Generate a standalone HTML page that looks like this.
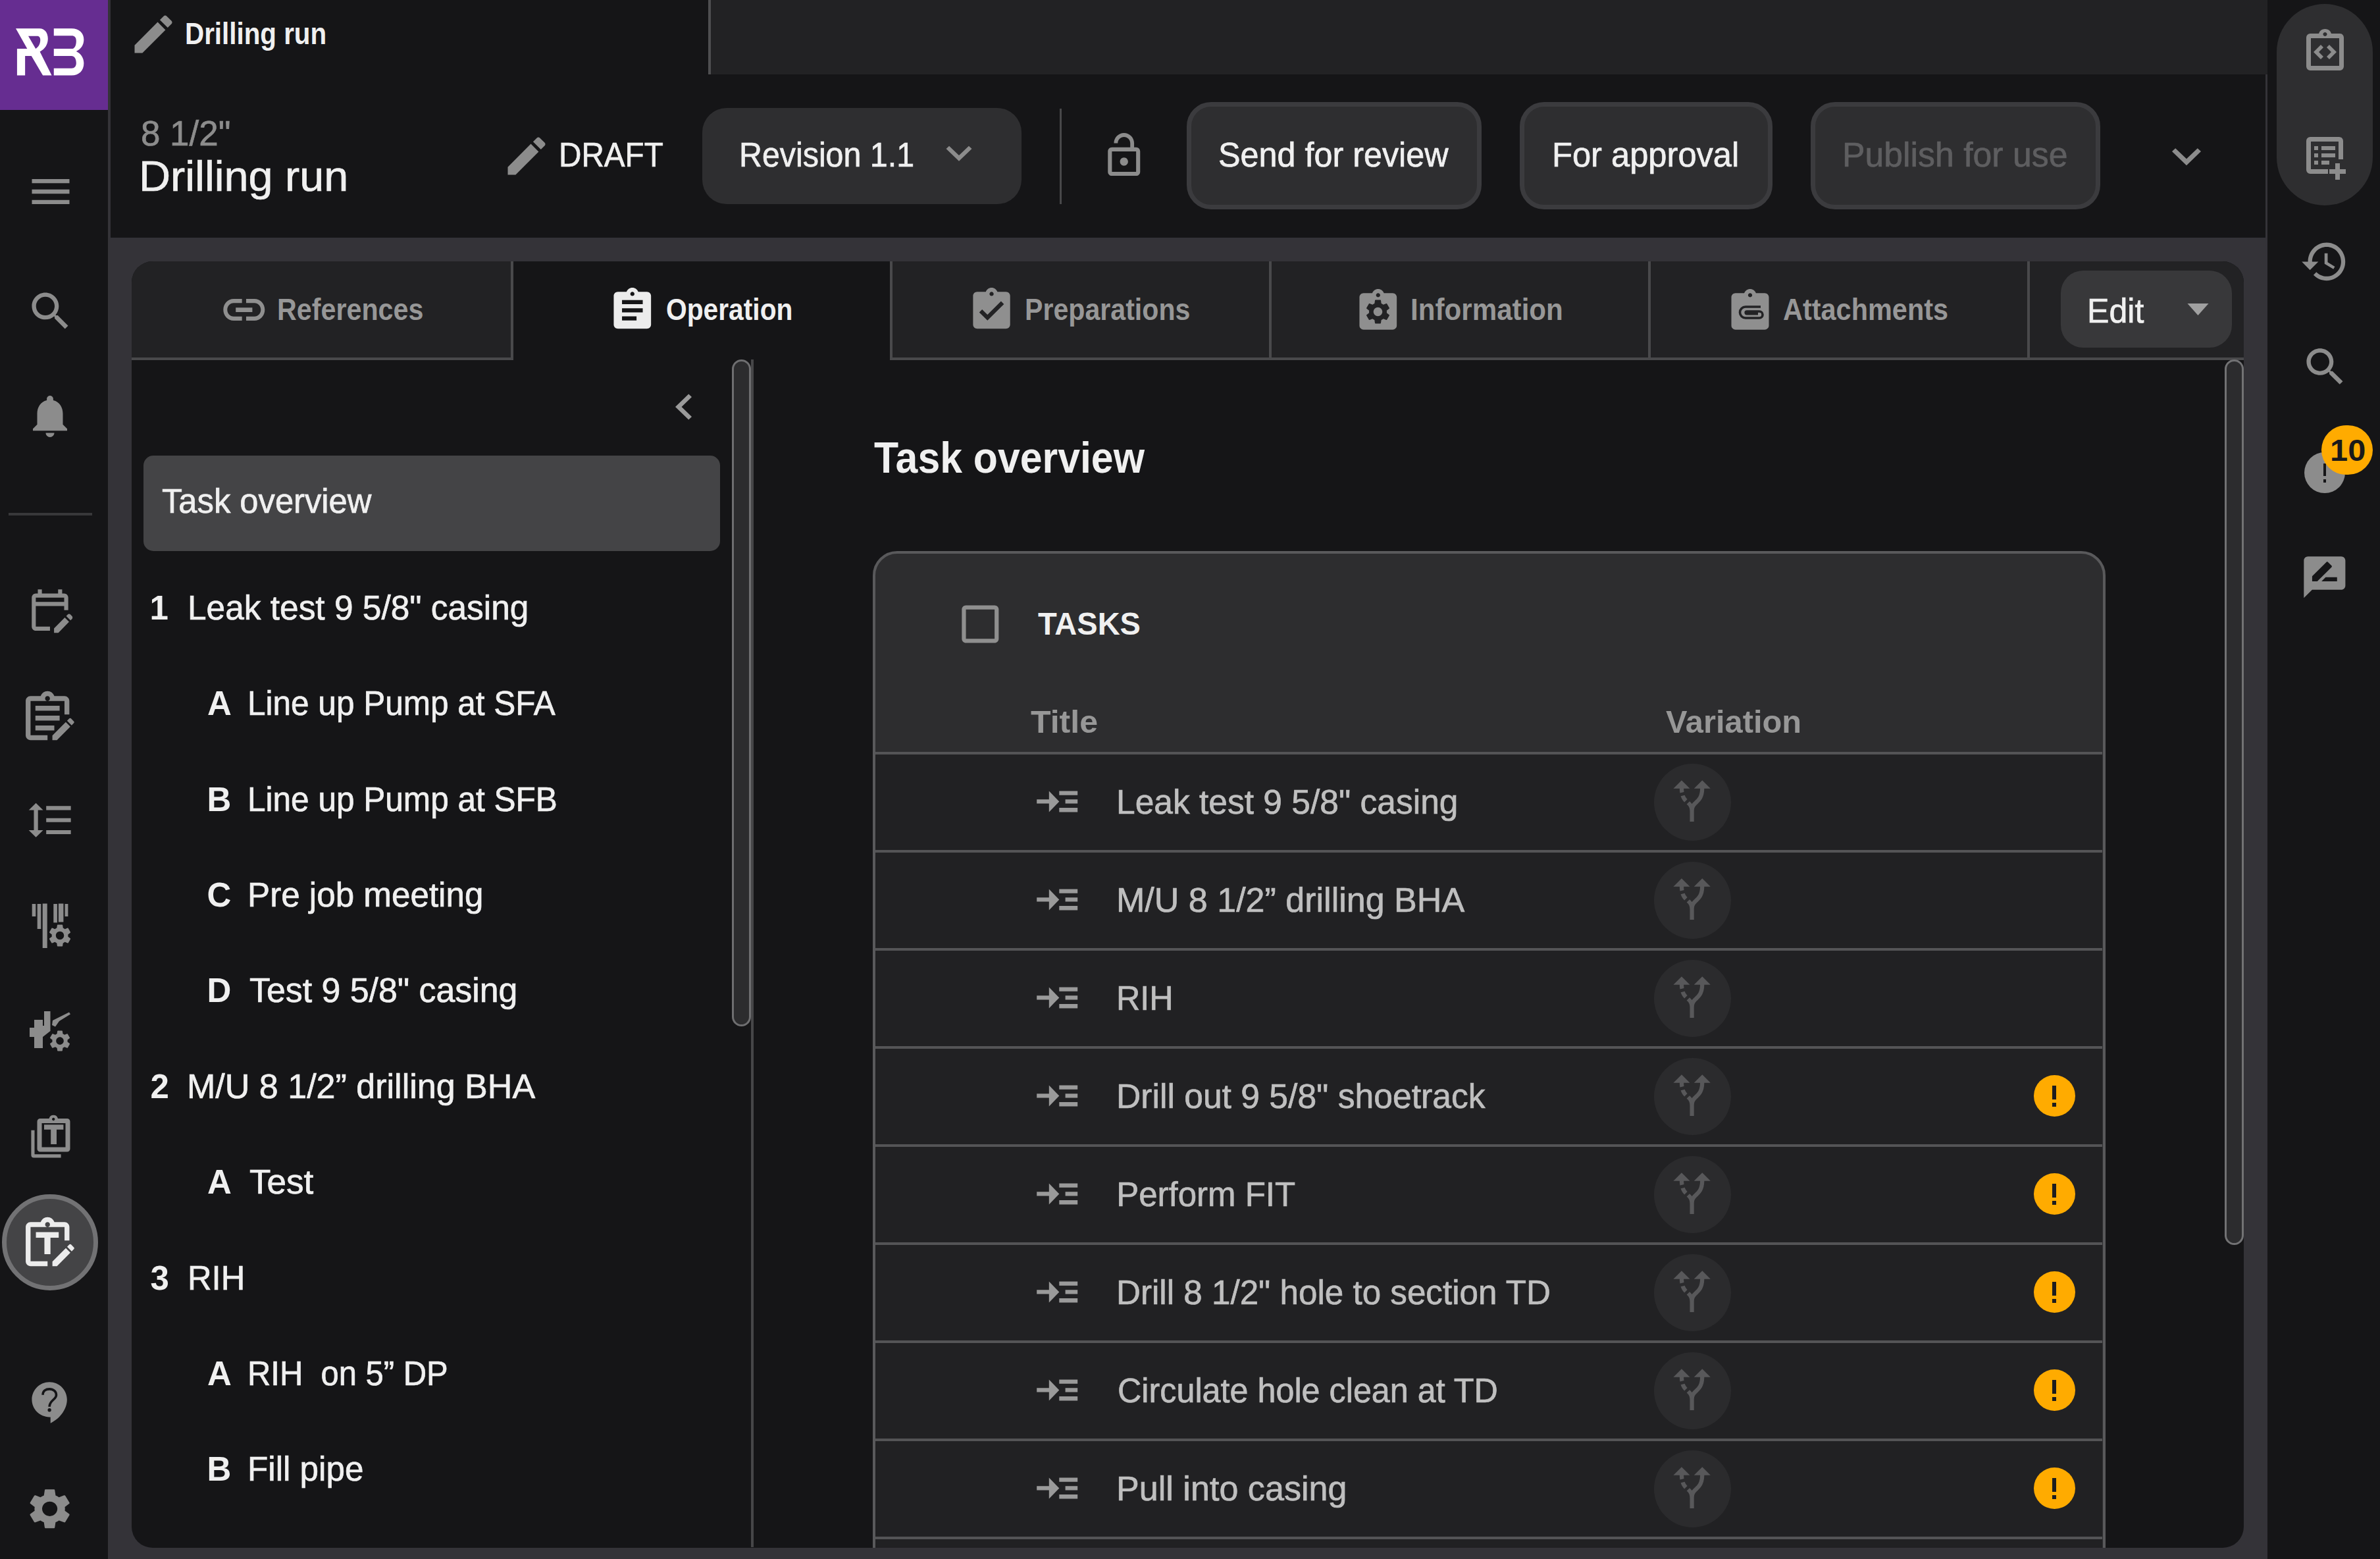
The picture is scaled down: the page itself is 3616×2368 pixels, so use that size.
<!DOCTYPE html>
<html lang="en"><head><meta charset="utf-8"><title>Drilling run</title>
<style>
html,body{margin:0;padding:0;}
body{width:3616px;height:2368px;overflow:hidden;background:#343338;font-family:"Liberation Sans",sans-serif;position:relative;}
div,nav,header,section,aside,main,button,svg,span{position:absolute;margin:0;padding:0;}
button{font:inherit;color:inherit;border:none;outline:none;}
span.t{white-space:pre;line-height:1;transform-origin:0 0;-webkit-text-stroke:0.7px currentColor;}
span.b{-webkit-text-stroke:0;}
</style></head>
<body>
<nav class="side" style="left:0px;top:0px;width:163.7px;height:2368px;background:#151517;"><div class="logo" style="left:0px;top:0px;width:163.7px;height:166.5px;background:#662d91;"><svg style="left:24.4px;top:41.7px;width:104px;height:73.200px" viewBox="190 325 810 570" fill="#fff" preserveAspectRatio="none"><path fill-rule="evenodd" d="M190,335 H470 C535,335 570,390 570,455 C570,525 535,575 475,610 L615,890 H510 L375,660 H300 V890 H205 V575 H325 Z M338,425 L425,575 C465,550 480,510 480,470 C480,440 465,425 440,425 Z"/><path d="M640,335 H850 C940,335 995,390 995,465 C995,530 960,580 905,605 C960,630 995,685 995,745 C995,830 940,890 850,890 H640 V805 H850 C885,805 905,780 905,745 C905,690 880,660 850,660 H640 V575 H850 C885,575 905,540 905,480 C905,440 885,420 850,420 H640 Z"/></svg></div><svg style="left:38.5px;top:253px;width:76px;height:76px" viewBox="0 0 24 24" fill="#8c8c8c" preserveAspectRatio="none"><path d="M3 18h18v-2H3v2zm0-5h18v-2H3v2zm0-7v2h18V6H3z"/></svg><svg style="left:38.6px;top:434.6px;width:75.5px;height:75.5px" viewBox="0 0 24 24" fill="#8c8c8c" preserveAspectRatio="none"><path d="M15.5 14h-.79l-.28-.27C15.41 12.59 16 11.11 16 9.5 16 5.91 13.09 3 9.5 3S3 5.91 3 9.5 5.91 16 9.5 16c1.61 0 3.09-.59 4.23-1.57l.27.28v.79l5 4.99L20.49 19l-4.99-5zm-6 0C7.01 14 5 11.99 5 9.5S7.01 5 9.5 5 14 7.01 14 9.5 11.99 14 9.5 14z"/></svg><svg style="left:37px;top:592.9px;width:78px;height:77.5px" viewBox="0 0 24 24" fill="#8c8c8c" preserveAspectRatio="none"><path d="M12 22c1.1 0 2-.9 2-2h-4c0 1.1.89 2 2 2zm6-6v-5c0-3.07-1.64-5.64-4.5-6.32V4c0-.83-.67-1.5-1.5-1.5s-1.5.67-1.5 1.5v.68C7.63 5.36 6 7.92 6 11v5l-2 2v1h16v-1l-2-2z"/></svg><div style="left:13px;top:779px;width:127px;height:3.5px;background:#38383a;"></div><svg style="left:38.8px;top:888.7px;width:73.9px;height:75.4px" viewBox="0 0 24 24" fill="#8c8c8c" preserveAspectRatio="none"><path d="M5 10h14v2h2V6c0-1.1-.9-2-2-2h-1V2h-2v2H8V2H6v2H5c-1.11 0-1.99.9-1.99 2L3 20c0 1.1.89 2 2 2h7v-2H5V10zm0-4h14v2H5V6zm17.84 10.28l-.71.71-2.12-2.12.71-.71c.39-.39 1.02-.39 1.41 0l.71.71c.39.39.39 1.02 0 1.41zm-3.54-.7l2.12 2.12-5.3 5.3H14v-2.12l5.3-5.3z"/></svg><svg style="left:28.4px;top:1045.7px;width:88.4px;height:89.5px" viewBox="0 0 24 24" fill="#8c8c8c" preserveAspectRatio="none"><path fill-rule="evenodd" d="M19 3h-4.180C14.400 1.840 13.300 1 12 1S9.600 1.840 9.180 3H5c-1.100 0-2 .900-2 2v14c0 1.100.900 2 2 2h7v-2H5V5h14v5.500h2V5c0-1.100-.900-2-2-2zm-7 0c.550 0 1 .450 1 1s-.450 1-1 1-1-.450-1-1 .450-1 1-1z"/><path d="M7 7h10v2H7zM7 11h10v2H7zM7 15h7.800v2H7z"/><g transform="translate(12.500,10.500) scale(0.5)"><path d="M3 17.25V21h3.75L17.81 9.94l-3.75-3.75L3 17.25zM20.71 7.04c.39-.39.39-1.02 0-1.41l-2.34-2.34c-.39-.39-1.02-.39-1.41 0l-1.83 1.83 3.75 3.75 1.83-1.83z"/></g></svg><svg style="left:39.3px;top:1209.3px;width:74.9px;height:73.4px" viewBox="0 0 24 24" fill="#8c8c8c" preserveAspectRatio="none"><path d="M6 7h2.5L5 3.5 1.5 7H4v10H1.5L5 20.5 8.5 17H6V7zm4-2v2h12V5H10zm0 14h12v-2H10v2zm0-6h12v-2H10v2z"/></svg><svg style="left:48px;top:1372px;width:60px;height:69px" viewBox="0 0 60 69" fill="#8c8c8c" preserveAspectRatio="none"><rect x=".700" y="1" width="5.600" height="19"/><rect x="8.700" y="1" width="5.600" height="38"/><rect x="16.700" y=".500" width="7" height="67.500"/><rect x="33.300" y="1" width="5.600" height="28.400"/><rect x="40.900" y=".500" width="7.500" height="28"/><rect x="50.600" y="1" width="4.800" height="19"/><g transform="translate(22.400,28.400) scale(1.72)"><path d="M19.14 12.94c.04-.3.06-.61.06-.94 0-.32-.02-.64-.07-.94l2.03-1.58c.18-.14.23-.41.12-.61l-1.92-3.32c-.12-.22-.37-.29-.59-.22l-2.39.96c-.5-.38-1.03-.7-1.62-.94l-.36-2.54c-.04-.24-.24-.41-.48-.41h-3.84c-.24 0-.43.17-.47.41l-.36 2.54c-.59.24-1.13.57-1.62.94l-2.39-.96c-.22-.08-.47 0-.59.22L2.74 8.87c-.12.21-.08.47.12.61l2.03 1.58c-.05.3-.09.63-.09.94s.02.64.07.94l-2.03 1.58c-.18.14-.23.41-.12.61l1.92 3.32c.12.22.37.29.59.22l2.39-.96c.5.38 1.03.7 1.62.94l.36 2.54c.05.24.24.41.48.41h3.84c.24 0 .44-.17.47-.41l.36-2.54c.59-.24 1.13-.56 1.62-.94l2.39.96c.22.08.47 0 .59-.22l1.92-3.32c.12-.22.07-.47-.12-.61l-2.01-1.58zM12 15.6c-1.98 0-3.6-1.62-3.6-3.6s1.62-3.6 3.6-3.6 3.6 1.62 3.6 3.6-1.62 3.6-3.6 3.6z"/></g></svg><svg style="left:45px;top:1536px;width:62px;height:61px" viewBox="0 0 62 61" fill="#8c8c8c" preserveAspectRatio="none"><path d="M7 13H20V22H22V0H31.500V30L20 39V56H7V39H0V25H7Z"/><path d="M35 14L60 1.500 62 4.500 45 15 39 23.500 34 21Z"/><g transform="translate(26.700,25.700) scale(1.61)"><path d="M19.14 12.94c.04-.3.06-.61.06-.94 0-.32-.02-.64-.07-.94l2.03-1.58c.18-.14.23-.41.12-.61l-1.92-3.32c-.12-.22-.37-.29-.59-.22l-2.39.96c-.5-.38-1.03-.7-1.62-.94l-.36-2.54c-.04-.24-.24-.41-.48-.41h-3.84c-.24 0-.43.17-.47.41l-.36 2.54c-.59.24-1.13.57-1.62.94l-2.39-.96c-.22-.08-.47 0-.59.22L2.74 8.87c-.12.21-.08.47.12.61l2.03 1.58c-.05.3-.09.63-.09.94s.02.64.07.94l-2.03 1.58c-.18.14-.23.41-.12.61l1.92 3.32c.12.22.37.29.59.22l2.39-.96c.5.38 1.03.7 1.62.94l.36 2.54c.05.24.24.41.48.41h3.84c.24 0 .44-.17.47-.41l.36-2.54c.59-.24 1.13-.56 1.62-.94l2.39.96c.22.08.47 0 .59-.22l1.92-3.32c.12-.22.07-.47-.12-.61l-2.01-1.58zM12 15.6c-1.98 0-3.6-1.62-3.6-3.6s1.62-3.6 3.6-3.6 3.6 1.62 3.6 3.6-1.62 3.6-3.6 3.6z"/></g></svg><svg style="left:47px;top:1693px;width:60px;height:66px" viewBox="0 0 60 66" fill="#8c8c8c" preserveAspectRatio="none"><path fill-rule="evenodd" d="M14 6h13.500a7 7 0 0 1 13.500 0H55a4.500 4.500 0 0 1 4.500 4.500v41.500a4.500 4.500 0 0 1-4.500 4.500H14a4.500 4.500 0 0 1-4.500-4.500V10.500A4.500 4.500 0 0 1 14 6zm2.500 7v36.500h36V13zm17.700-8.200a2.200 2.200 0 1 0 .010 0z"/><path d="M20 15.300h29.400v7.500H39v22.200h-8.800V22.800H20z"/><path d="M.400 23.700h5.100v36.600h40.100v5.300H4.400a4 4 0 0 1-4-4z"/></svg><div style="left:3.3px;top:1814.2px;width:146px;height:146px;background:#444446;border-radius:73px;border:7.300px solid #727274;box-sizing:border-box;"></div><svg style="left:27.9px;top:1845.4px;width:88.5px;height:89.5px" viewBox="0 0 24 24" fill="#ececec" preserveAspectRatio="none"><path fill-rule="evenodd" d="M19 3h-4.180C14.400 1.840 13.300 1 12 1S9.600 1.840 9.180 3H5c-1.100 0-2 .900-2 2v14c0 1.100.900 2 2 2h7v-2H5V5h14v5.500h2V5c0-1.100-.900-2-2-2zm-7 0c.550 0 1 .450 1 1s-.450 1-1 1-1-.450-1-1 .450-1 1-1z"/><path d="M7.200 7.100h9.400v2.300h-3.400v6.700h-2.500V9.400H7.200z"/><g transform="translate(12.500,10.500) scale(0.5)"><path d="M3 17.25V21h3.75L17.81 9.94l-3.75-3.75L3 17.25zM20.71 7.04c.39-.39.39-1.02 0-1.41l-2.34-2.34c-.39-.39-1.02-.39-1.41 0l-1.83 1.83 3.75 3.75 1.83-1.83z"/></g></svg><svg style="left:39px;top:2093.2px;width:75.4px;height:75px" viewBox="0 0 24 24" fill="#8c8c8c" preserveAspectRatio="none"><path d="M11.500 2C6.810 2 3 5.810 3 10.500S6.810 19 11.500 19h.500v3c4.860-2.340 8-7 8-11.500C20 5.810 16.190 2 11.500 2z"/><path d="M8.300 8.200C8.300 6.200 9.800 5.400 11.500 5.400c1.900 0 3.300 1.200 3.300 2.800 0 2.400-3.300 2.600-3.300 5.800" fill="none" stroke="#151517" stroke-width="1.150"/><circle cx="11.500" cy="15.600" r=".850" fill="#151517"/></svg><svg style="left:37.4px;top:2254.6px;width:77.2px;height:73.7px" viewBox="0 0 24 24" fill="#8c8c8c" preserveAspectRatio="none"><path d="M19.14 12.94c.04-.3.06-.61.06-.94 0-.32-.02-.64-.07-.94l2.03-1.58c.18-.14.23-.41.12-.61l-1.92-3.32c-.12-.22-.37-.29-.59-.22l-2.39.96c-.5-.38-1.03-.7-1.62-.94l-.36-2.54c-.04-.24-.24-.41-.48-.41h-3.84c-.24 0-.43.17-.47.41l-.36 2.54c-.59.24-1.13.57-1.62.94l-2.39-.96c-.22-.08-.47 0-.59.22L2.74 8.87c-.12.21-.08.47.12.61l2.03 1.58c-.05.3-.09.63-.09.94s.02.64.07.94l-2.03 1.58c-.18.14-.23.41-.12.61l1.92 3.32c.12.22.37.29.59.22l2.39-.96c.5.38 1.03.7 1.62.94l.36 2.54c.05.24.24.41.48.41h3.84c.24 0 .44-.17.47-.41l.36-2.54c.59-.24 1.13-.56 1.62-.94l2.39.96c.22.08.47 0 .59-.22l1.92-3.32c.12-.22.07-.47-.12-.61l-2.01-1.58zM12 15.6c-1.98 0-3.6-1.62-3.6-3.6s1.62-3.6 3.6-3.6 3.6 1.62 3.6 3.6-1.62 3.6-3.6 3.6z"/></svg></nav><header class="topbar" style="left:167.5px;top:0px;width:3277.7px;height:112.5px;background:#222224;"><div style="left:0px;top:0px;width:912.3px;height:112.5px;background:#151517;box-sizing:border-box;border-right:4.200px solid #4e4e50;"><svg style="left:27px;top:13.5px;width:76px;height:76px" viewBox="0 0 24 24" fill="#8c8c8c" preserveAspectRatio="none"><path d="M3 17.25V21h3.75L17.81 9.94l-3.75-3.75L3 17.25zM20.71 7.04c.39-.39.39-1.02 0-1.41l-2.34-2.34c-.39-.39-1.02-.39-1.41 0l-1.83 1.83 3.75 3.75 1.83-1.83z"/></svg><span class="t b" style="left:113.8px;top:28.5px;font-size:45.5px;color:#f0f0f0;font-weight:bold;transform:scaleX(0.8866);">Drilling run</span></div></header><section class="hdr" style="left:167.5px;top:112.5px;width:3274px;height:248px;background:#151517;"><span class="t" style="left:46.5px;top:63.7px;font-size:53.5px;color:#8c8c8c;transform:scaleX(0.9889);">8 1/2"</span><span class="t" style="left:43.4px;top:122.5px;font-size:65px;color:#f0f0f0;transform:scaleX(1.0249);">Drilling run</span><svg style="left:594px;top:86px;width:76px;height:76px" viewBox="0 0 24 24" fill="#8c8c8c" preserveAspectRatio="none"><path d="M3 17.25V21h3.75L17.81 9.94l-3.75-3.75L3 17.25zM20.71 7.04c.39-.39.39-1.02 0-1.41l-2.34-2.34c-.39-.39-1.02-.39-1.41 0l-1.83 1.83 3.75 3.75 1.83-1.83z"/></svg><span class="t" style="left:681.8px;top:97.3px;font-size:51.0px;color:#f0f0f0;transform:scaleX(0.9343);">DRAFT</span><div style="left:899.5px;top:51.5px;width:485px;height:145.5px;background:#2e2e30;border-radius:37px;"><span class="t" style="left:56px;top:45.8px;font-size:51.0px;color:#f0f0f0;transform:scaleX(0.9479);">Revision 1.1</span><svg style="left:350.5px;top:31.3px;width:78px;height:74.5px" viewBox="0 0 24 24" fill="#8c8c8c" preserveAspectRatio="none"><path d="M16.59 8.59L12 13.17 7.41 8.59 6 10l6 6 6-6z"/></svg></div><div style="left:1442px;top:52.5px;width:3.6px;height:145px;background:#48484a;"></div><svg style="left:1503.2px;top:86.4px;width:73.5px;height:74.3px" viewBox="0 0 24 24" fill="#8c8c8c" preserveAspectRatio="none"><path d="M12 17c1.1 0 2-.9 2-2s-.9-2-2-2-2 .9-2 2 .9 2 2 2zm6-9h-1V6c0-2.76-2.24-5-5-5S7 3.24 7 6h1.9c0-1.71 1.39-3.1 3.1-3.1 1.71 0 3.1 1.39 3.1 3.1v2H6c-1.1 0-2 .9-2 2v10c0 1.1.9 2 2 2h12c1.1 0 2-.9 2-2V10c0-1.1-.9-2-2-2zm0 12H6V10h12v10z"/></svg><button style="left:1635.5px;top:42.8px;width:448.4px;height:162.3px;background:#2e2e30;border-radius:37px;border:7px solid #3b3b3e;box-sizing:border-box;"><span class="t" style="left:41px;top:47.5px;font-size:51.0px;color:#f0f0f0;transform:scaleX(0.9864);">Send for review</span></button><button style="left:2141.9px;top:42.8px;width:383.6px;height:162.3px;background:#2e2e30;border-radius:37px;border:7px solid #3b3b3e;box-sizing:border-box;"><span class="t" style="left:41.8px;top:47.5px;font-size:51.0px;color:#f0f0f0;transform:scaleX(0.9929);">For approval</span></button><button style="left:2583.5px;top:42.8px;width:440px;height:162.3px;background:#2e2e30;border-radius:37px;border:7px solid #3b3b3e;box-sizing:border-box;"><span class="t" style="left:40.9px;top:47.5px;font-size:51.0px;color:#5e5e60;transform:scaleX(1.0151);">Publish for use</span></button><svg style="left:3110px;top:82.4px;width:88px;height:84.2px" viewBox="0 0 24 24" fill="#8c8c8c" preserveAspectRatio="none"><path d="M16.59 8.59L12 13.17 7.41 8.59 6 10l6 6 6-6z"/></svg></section><aside class="rside" style="left:3445.2px;top:0px;width:170.8px;height:2368px;background:#151517;"><div style="left:14.3px;top:6.4px;width:145.3px;height:306px;background:#2e2e30;border-radius:73px;"></div><svg style="left:58.8px;top:44px;width:57px;height:63px" viewBox="0 0 57 63" fill="#8c8c8c" preserveAspectRatio="none"><path fill-rule="evenodd" d="M6 7h13a10 10 0 0 1 19 0h13a6 6 0 0 1 6 6v44a6 6 0 0 1-6 6H6a6 6 0 0 1-6-6V13a6 6 0 0 1 6-6zm1 7v42h43V14zm21.500-9a3 3 0 1 0 .010 0z"/><path d="M22 24l4 4-7 7 7 7-4 4-11-11zM35 24l-4 4 7 7-7 7 4 4 11-11z"/></svg><svg style="left:58.8px;top:208px;width:60px;height:65px" viewBox="0 0 60 65" fill="#8c8c8c" preserveAspectRatio="none"><path fill-rule="evenodd" d="M6 0h44a6 6 0 0 1 6 6v28h-7V7H7v42h26v7H6a6 6 0 0 1-6-6V6a6 6 0 0 1 6-6z"/><path d="M12 14h6v6h-6zM23 14h21v6H23zM12 25h6v6h-6zM23 25h21v6H23zM12 36h6v6h-6zM23 36h12v6H23z"/><path d="M44 40h7v9h9v7h-9v9h-7v-9h-9v-7h9z"/></svg><svg style="left:49.3px;top:358.9px;width:75.5px;height:76.9px" viewBox="0 0 24 24" fill="#8c8c8c" preserveAspectRatio="none"><path d="M13 3c-4.97 0-9 4.03-9 9H1l3.89 3.89.07.14L9 12H6c0-3.87 3.13-7 7-7s7 3.13 7 7-3.13 7-7 7c-1.93 0-3.68-.79-4.94-2.06l-1.42 1.42C8.27 19.99 10.51 21 13 21c4.97 0 9-4.03 9-9s-4.03-9-9-9zm-1 5v5l4.28 2.54.72-1.21-3.5-2.08V8H12z"/></svg><svg style="left:49.4px;top:520.2px;width:75.5px;height:74.8px" viewBox="0 0 24 24" fill="#8c8c8c" preserveAspectRatio="none"><path d="M15.5 14h-.79l-.28-.27C15.41 12.59 16 11.11 16 9.5 16 5.91 13.09 3 9.5 3S3 5.91 3 9.5 5.91 16 9.5 16c1.61 0 3.09-.59 4.23-1.57l.27.28v.79l5 4.99L20.49 19l-4.99-5zm-6 0C7.01 14 5 11.99 5 9.5S7.01 5 9.5 5 14 7.01 14 9.5 11.99 14 9.5 14z"/></svg><div style="left:55.8px;top:687px;width:62px;height:62px;background:#8c8c8c;border-radius:31px;"><div style="left:29px;top:16.6px;width:4.5px;height:19.2px;background:#151517;"></div><div style="left:29px;top:41px;width:4.5px;height:4.5px;background:#151517;"></div></div><div style="left:81.8px;top:645.5px;width:78px;height:75px;background:#ffab00;border-radius:38px;"><span class="t b" style="left:12.9px;top:14.7px;font-size:47px;color:#1a1a1a;font-weight:bold;transform:scaleX(1.0379);">10</span></div><svg style="left:49.1px;top:838.7px;width:75.7px;height:75.6px" viewBox="0 0 24 24" fill="#8c8c8c" preserveAspectRatio="none"><path d="M20 2H4c-1.1 0-1.99.9-1.99 2L2 22l4-4h14c1.1 0 2-.9 2-2V4c0-1.1-.9-2-2-2zM6 14v-2.47l6.88-6.88c.2-.2.51-.2.71 0l1.77 1.77c.2.2.2.51 0 .71L8.47 14H6zm12 0h-7.5l2-2H18v2z"/></svg></aside><main class="panel" style="left:200px;top:396.5px;width:3209px;height:1954px;background:#151517;border-radius:32px;overflow:hidden;"><div class="tab" style="left:0px;top:0px;width:580.3px;height:150px;background:#222224;box-sizing:border-box;border-bottom:4.3px solid #49494b;border-right:4.3px solid #49494b;border-top-left-radius:30px;"><svg style="left:132.7px;top:34.2px;width:75.6px;height:79.2px" viewBox="0 0 24 24" fill="#8f8f8f" preserveAspectRatio="none"><path d="M3.9 12c0-1.71 1.39-3.1 3.1-3.1h4V7H7c-2.76 0-5 2.24-5 5s2.24 5 5 5h4v-1.9H7c-1.71 0-3.1-1.39-3.1-3.1zM8 13h8v-2H8v2zm9-6h-4v1.9h4c1.71 0 3.1 1.39 3.1 3.1s-1.39 3.1-3.1 3.1h-4V17h4c2.76 0 5-2.24 5-5s-2.24-5-5-5z"/></svg><span class="t b" style="left:220.5px;top:51.5px;font-size:45.5px;color:#979797;font-weight:bold;transform:scaleX(0.9065);">References</span></div><div class="tab" style="left:580.3px;top:0px;width:571.7px;height:150px;background:#151517;box-sizing:border-box;"><svg style="left:143px;top:37.4px;width:75.6px;height:74.6px" viewBox="0 0 24 24" fill="#ececec" preserveAspectRatio="none"><path d="M19 3h-4.18C14.4 1.84 13.3 1 12 1c-1.3 0-2.4.84-2.82 2H5c-1.1 0-2 .9-2 2v14c0 1.1.9 2 2 2h14c1.1 0 2-.9 2-2V5c0-1.1-.9-2-2-2zm-7 0c.55 0 1 .45 1 1s-.45 1-1 1-1-.45-1-1 .45-1 1-1zm2 14H7v-2h7v2zm3-4H7v-2h10v2zm0-4H7V7h10v2z"/></svg><span class="t b" style="left:231.8px;top:51.5px;font-size:45.5px;color:#f0f0f0;font-weight:bold;transform:scaleX(0.8954);">Operation</span></div><div class="tab" style="left:1152px;top:0px;width:576px;height:150px;background:#222224;box-sizing:border-box;border-bottom:4.3px solid #49494b;border-left:4.3px solid #49494b;"><svg style="left:113.3px;top:37.4px;width:75.1px;height:74.6px" viewBox="0 0 24 24" fill="#8f8f8f" preserveAspectRatio="none"><path d="M19 3h-4.18C14.4 1.84 13.3 1 12 1c-1.3 0-2.4.84-2.82 2H5c-1.1 0-2 .9-2 2v14c0 1.1.9 2 2 2h14c1.1 0 2-.9 2-2V5c0-1.1-.9-2-2-2zm-7 0c.55 0 1 .45 1 1s-.45 1-1 1-1-.45-1-1 .45-1 1-1zm-2 14l-4-4 1.41-1.41L10 14.17l6.59-6.59L18 9l-8 8z"/></svg><span class="t b" style="left:200.5px;top:51.5px;font-size:45.5px;color:#979797;font-weight:bold;transform:scaleX(0.9038);">Preparations</span></div><div class="tab" style="left:1728px;top:0px;width:576px;height:150px;background:#222224;box-sizing:border-box;border-bottom:4.3px solid #49494b;border-left:4.3px solid #49494b;"><svg style="left:124.1px;top:39.7px;width:75.6px;height:74px" viewBox="0 0 24 24" fill="#8f8f8f" preserveAspectRatio="none"><path d="M19 3h-4.18C14.4 1.84 13.3 1 12 1c-1.3 0-2.4.84-2.82 2H5c-1.1 0-2 .9-2 2v14c0 1.1.9 2 2 2h14c1.1 0 2-.9 2-2V5c0-1.1-.9-2-2-2zm-7 0c.55 0 1 .45 1 1s-.45 1-1 1-1-.45-1-1 .45-1 1-1z"/></svg><svg style="left:139.2px;top:54.8px;width:45px;height:45px" viewBox="0 0 24 24" fill="#222224"><path d="M19.14 12.94c.04-.3.06-.61.06-.94 0-.32-.02-.64-.07-.94l2.03-1.58c.18-.14.23-.41.12-.61l-1.92-3.32c-.12-.22-.37-.29-.59-.22l-2.39.96c-.5-.38-1.03-.7-1.62-.94l-.36-2.54c-.04-.24-.24-.41-.48-.41h-3.84c-.24 0-.43.17-.47.41l-.36 2.54c-.59.24-1.13.57-1.62.94l-2.39-.96c-.22-.08-.47 0-.59.22L2.74 8.87c-.12.21-.08.47.12.61l2.03 1.58c-.05.3-.09.63-.09.94s.02.64.07.94l-2.03 1.58c-.18.14-.23.41-.12.61l1.92 3.32c.12.22.37.29.59.22l2.39-.96c.5.38 1.03.7 1.62.94l.36 2.54c.05.24.24.41.48.41h3.84c.24 0 .44-.17.47-.41l.36-2.54c.59-.24 1.13-.56 1.62-.94l2.39.96c.22.08.47 0 .59-.22l1.92-3.32c.12-.22.07-.47-.12-.61l-2.01-1.58zM12 15.6c-1.98 0-3.6-1.62-3.6-3.6s1.62-3.6 3.6-3.6 3.6 1.62 3.6 3.6-1.62 3.6-3.6 3.6z"/></svg><span class="t b" style="left:211.4px;top:51.5px;font-size:45.5px;color:#979797;font-weight:bold;transform:scaleX(0.9266);">Information</span></div><div class="tab" style="left:2304px;top:0px;width:576px;height:150px;background:#222224;box-sizing:border-box;border-bottom:4.3px solid #49494b;border-left:4.3px solid #49494b;"><svg style="left:113.2px;top:39.7px;width:76px;height:74px" viewBox="0 0 24 24" fill="#8f8f8f" preserveAspectRatio="none"><path d="M19 3h-4.18C14.4 1.84 13.3 1 12 1c-1.3 0-2.4.84-2.82 2H5c-1.1 0-2 .9-2 2v14c0 1.1.9 2 2 2h14c1.1 0 2-.9 2-2V5c0-1.1-.9-2-2-2zm-7 0c.55 0 1 .45 1 1s-.45 1-1 1-1-.45-1-1 .45-1 1-1z"/></svg><svg style="left:130.7px;top:64px;width:42px;height:27px" viewBox="0 0 42 27" fill="none" stroke="#222224" stroke-width="3.600"><path d="M36 5H13a8.500 8.500 0 0 0 0 17h21a5 5 0 0 0 0-10H15a1.800 1.800 0 0 0 0 3.600h17"/></svg><span class="t b" style="left:201.3px;top:51.5px;font-size:45.5px;color:#979797;font-weight:bold;transform:scaleX(0.9112);">Attachments</span></div><div style="left:2880px;top:0px;width:329px;height:150px;background:#222224;box-sizing:border-box;border-bottom:4.3px solid #49494b;border-left:4.3px solid #49494b;border-top-right-radius:32px;"><div style="left:46.7px;top:14.5px;width:260px;height:117px;background:#38383a;border-radius:34px;"><span class="t" style="left:40.8px;top:34.6px;font-size:52px;color:#f0f0f0;transform:scaleX(0.9634);">Edit</span><svg style="left:170.2px;top:14px;width:77px;height:86.4px" viewBox="0 0 24 24" fill="#a0a0a0" preserveAspectRatio="none"><path d="M7 10l5 5 5-5z"/></svg></div></div><div class="list" style="left:0px;top:0px;width:944px;height:1953.5px;"><svg style="left:799px;top:182px;width:81px;height:78px" viewBox="0 0 24 24" fill="#9a9a9a" preserveAspectRatio="none"><path d="M15.41 7.41L14 6l-6 6 6 6 1.41-1.41L10.83 12z"/></svg><div style="left:18px;top:295px;width:876px;height:145.5px;background:#444446;border-radius:15px;"><span class="t" style="left:28px;top:44.9px;font-size:51.0px;color:#f0f0f0;transform:scaleX(0.9942);">Task overview</span></div><span class="t b" style="left:27.5px;top:501.3px;font-size:51.0px;color:#f0f0f0;font-weight:bold;">1</span><span class="t" style="left:84.5px;top:501.3px;font-size:51.0px;color:#f0f0f0;transform:scaleX(1.0081);">Leak test 9 5/8" casing</span><span class="t b" style="left:115px;top:646.7px;font-size:51.0px;color:#f0f0f0;font-weight:bold;">A</span><span class="t" style="left:176.1px;top:646.7px;font-size:51.0px;color:#f0f0f0;transform:scaleX(0.9708);">Line up Pump at SFA</span><span class="t b" style="left:114.5px;top:792.1px;font-size:51.0px;color:#f0f0f0;font-weight:bold;">B</span><span class="t" style="left:176.1px;top:792.1px;font-size:51.0px;color:#f0f0f0;transform:scaleX(0.9713);">Line up Pump at SFB</span><span class="t b" style="left:114.5px;top:937.5px;font-size:51.0px;color:#f0f0f0;font-weight:bold;">C</span><span class="t" style="left:176px;top:937.5px;font-size:51.0px;color:#f0f0f0;transform:scaleX(1.0033);">Pre job meeting</span><span class="t b" style="left:114.5px;top:1082.9px;font-size:51.0px;color:#f0f0f0;font-weight:bold;">D</span><span class="t" style="left:179px;top:1082.9px;font-size:51.0px;color:#f0f0f0;transform:scaleX(1.0164);">Test 9 5/8" casing</span><span class="t b" style="left:28.5px;top:1228.3px;font-size:51.0px;color:#f0f0f0;font-weight:bold;">2</span><span class="t" style="left:84.4px;top:1228.3px;font-size:51.0px;color:#f0f0f0;transform:scaleX(1.0201);">M/U 8 1/2” drilling BHA</span><span class="t b" style="left:115px;top:1373.7px;font-size:51.0px;color:#f0f0f0;font-weight:bold;">A</span><span class="t" style="left:179px;top:1373.7px;font-size:51.0px;color:#f0f0f0;transform:scaleX(1.0394);">Test</span><span class="t b" style="left:28.5px;top:1519.1px;font-size:51.0px;color:#f0f0f0;font-weight:bold;">3</span><span class="t" style="left:84.5px;top:1519.1px;font-size:51.0px;color:#f0f0f0;transform:scaleX(0.9938);">RIH</span><span class="t b" style="left:115px;top:1664.5px;font-size:51.0px;color:#f0f0f0;font-weight:bold;">A</span><span class="t" style="left:176.2px;top:1664.5px;font-size:51.0px;color:#f0f0f0;transform:scaleX(0.9601);">RIH  on 5” DP</span><span class="t b" style="left:114.5px;top:1809.9px;font-size:51.0px;color:#f0f0f0;font-weight:bold;">B</span><span class="t" style="left:176px;top:1809.9px;font-size:51.0px;color:#f0f0f0;transform:scaleX(1.0037);">Fill pipe</span></div><div style="left:911.6px;top:149.3px;width:29.5px;height:1013px;background:#2c2c2e;border-radius:15px;border:3.200px solid #6e6e70;box-sizing:border-box;"></div><div style="left:941px;top:149.5px;width:4.2px;height:1804px;background:#464648;"></div><div style="left:3180px;top:149.3px;width:29px;height:1345px;background:#2c2c2e;border-radius:15px;border:3.200px solid #727274;box-sizing:border-box;"></div><span class="t b" style="left:1127.5px;top:265.1px;font-size:66px;color:#f0f0f0;font-weight:bold;transform:scaleX(0.9205);">Task overview</span><div class="card" style="left:1126.3px;top:440px;width:1872.3px;height:1600px;background:#2d2d2f;border-radius:37px 37px 0 0;border:4.3px solid #59595b;box-sizing:border-box;overflow:hidden;"><svg style="left:122.1px;top:69.7px;width:74.7px;height:76px" viewBox="0 0 24 24" fill="#8f8f8f" preserveAspectRatio="none"><path d="M19 5v14H5V5h14m0-2H5c-1.1 0-2 .9-2 2v14c0 1.1.9 2 2 2h14c1.1 0 2-.9 2-2V5c0-1.1-.9-2-2-2z"/></svg><span class="t b" style="left:246.4px;top:83.4px;font-size:48px;color:#f0f0f0;font-weight:bold;transform:scaleX(0.9804);">TASKS</span><span class="t b" style="left:235.4px;top:231.7px;font-size:48.5px;color:#979797;font-weight:bold;transform:scaleX(1.0322);">Title</span><span class="t b" style="left:1200.4px;top:231.7px;font-size:48.5px;color:#979797;font-weight:bold;transform:scaleX(1.0063);">Variation</span><div class="row" style="left:0px;top:301.2px;width:1863.7px;height:149px;background:#212123;box-sizing:border-box;border-top:4px solid #545456;"><svg style="left:239.2px;top:33.6px;width:74.4px;height:76.8px" viewBox="0 0 24 24" fill="#9a9a9a" preserveAspectRatio="none"><path d="M13 7h9v2h-9zM13 15h9v2h-9zM16 11h6v2h-6zM13 12L8 7v4H2v2h6v4z"/></svg><span class="t" style="left:365.9px;top:47.6px;font-size:51.0px;color:#bfbfbf;transform:scaleX(1.0101);">Leak test 9 5/8" casing</span><div style="left:1182.4px;top:14px;width:117px;height:117px;background:#2b2b2d;border-radius:59px;"><svg style="left:20.2px;top:19px;width:75.2px;height:75.2px" viewBox="0 0 24 24" fill="#58585a" preserveAspectRatio="none"><path d="M9.78 11.16l-1.42 1.42c-.68-.69-1.34-1.58-1.79-2.94l1.94-.49c.32.89.77 1.5 1.27 2.01zM11 6L7 2 3 6h3.02c.02.81.08 1.54.19 2.17l1.94-.49C8.08 7.2 8.03 6.63 8.02 6H11zm10 0l-4-4-4 4h2.99c-.1 3.68-1.28 4.75-2.54 5.88-.5.44-1.01.92-1.45 1.55-.34-.49-.73-.88-1.13-1.24L9.46 13.6c.93.85 1.54 1.54 1.54 3.4v5h2v-5c0-2.02.71-2.66 1.79-3.63 1.38-1.24 3.08-2.78 3.2-7.37H21z"/></svg></div></div><div class="row" style="left:0px;top:450.2px;width:1863.7px;height:149px;background:#212123;box-sizing:border-box;border-top:4px solid #545456;"><svg style="left:239.2px;top:33.6px;width:74.4px;height:76.8px" viewBox="0 0 24 24" fill="#9a9a9a" preserveAspectRatio="none"><path d="M13 7h9v2h-9zM13 15h9v2h-9zM16 11h6v2h-6zM13 12L8 7v4H2v2h6v4z"/></svg><span class="t" style="left:365.8px;top:47.6px;font-size:51.0px;color:#bfbfbf;transform:scaleX(1.0201);">M/U 8 1/2” drilling BHA</span><div style="left:1182.4px;top:14px;width:117px;height:117px;background:#2b2b2d;border-radius:59px;"><svg style="left:20.2px;top:19px;width:75.2px;height:75.2px" viewBox="0 0 24 24" fill="#58585a" preserveAspectRatio="none"><path d="M9.78 11.16l-1.42 1.42c-.68-.69-1.34-1.58-1.79-2.94l1.94-.49c.32.89.77 1.5 1.27 2.01zM11 6L7 2 3 6h3.02c.02.81.08 1.54.19 2.17l1.94-.49C8.08 7.2 8.03 6.63 8.02 6H11zm10 0l-4-4-4 4h2.99c-.1 3.68-1.28 4.75-2.54 5.88-.5.44-1.01.92-1.45 1.55-.34-.49-.73-.88-1.13-1.24L9.46 13.6c.93.85 1.54 1.54 1.54 3.4v5h2v-5c0-2.02.71-2.66 1.79-3.63 1.38-1.24 3.08-2.78 3.2-7.37H21z"/></svg></div></div><div class="row" style="left:0px;top:599.2px;width:1863.7px;height:149px;background:#212123;box-sizing:border-box;border-top:4px solid #545456;"><svg style="left:239.2px;top:33.6px;width:74.4px;height:76.8px" viewBox="0 0 24 24" fill="#9a9a9a" preserveAspectRatio="none"><path d="M13 7h9v2h-9zM13 15h9v2h-9zM16 11h6v2h-6zM13 12L8 7v4H2v2h6v4z"/></svg><span class="t" style="left:366px;top:47.6px;font-size:51.0px;color:#bfbfbf;transform:scaleX(0.9875);">RIH</span><div style="left:1182.4px;top:14px;width:117px;height:117px;background:#2b2b2d;border-radius:59px;"><svg style="left:20.2px;top:19px;width:75.2px;height:75.2px" viewBox="0 0 24 24" fill="#58585a" preserveAspectRatio="none"><path d="M9.78 11.16l-1.42 1.42c-.68-.69-1.34-1.58-1.79-2.94l1.94-.49c.32.89.77 1.5 1.27 2.01zM11 6L7 2 3 6h3.02c.02.81.08 1.54.19 2.17l1.94-.49C8.08 7.2 8.03 6.63 8.02 6H11zm10 0l-4-4-4 4h2.99c-.1 3.68-1.28 4.75-2.54 5.88-.5.44-1.01.92-1.45 1.55-.34-.49-.73-.88-1.13-1.24L9.46 13.6c.93.85 1.54 1.54 1.54 3.4v5h2v-5c0-2.02.71-2.66 1.79-3.63 1.38-1.24 3.08-2.78 3.2-7.37H21z"/></svg></div></div><div class="row" style="left:0px;top:748.2px;width:1863.7px;height:149px;background:#212123;box-sizing:border-box;border-top:4px solid #545456;"><svg style="left:239.2px;top:33.6px;width:74.4px;height:76.8px" viewBox="0 0 24 24" fill="#9a9a9a" preserveAspectRatio="none"><path d="M13 7h9v2h-9zM13 15h9v2h-9zM16 11h6v2h-6zM13 12L8 7v4H2v2h6v4z"/></svg><span class="t" style="left:365.9px;top:47.6px;font-size:51.0px;color:#bfbfbf;transform:scaleX(1.0121);">Drill out 9 5/8" shoetrack</span><div style="left:1182.4px;top:14px;width:117px;height:117px;background:#2b2b2d;border-radius:59px;"><svg style="left:20.2px;top:19px;width:75.2px;height:75.2px" viewBox="0 0 24 24" fill="#58585a" preserveAspectRatio="none"><path d="M9.78 11.16l-1.42 1.42c-.68-.69-1.34-1.58-1.79-2.94l1.94-.49c.32.89.77 1.5 1.27 2.01zM11 6L7 2 3 6h3.02c.02.81.08 1.54.19 2.17l1.94-.49C8.08 7.2 8.03 6.63 8.02 6H11zm10 0l-4-4-4 4h2.99c-.1 3.68-1.28 4.75-2.54 5.88-.5.44-1.01.92-1.45 1.55-.34-.49-.73-.88-1.13-1.24L9.46 13.6c.93.85 1.54 1.54 1.54 3.4v5h2v-5c0-2.02.71-2.66 1.79-3.63 1.38-1.24 3.08-2.78 3.2-7.37H21z"/></svg></div><div style="left:1759.4px;top:40px;width:63px;height:63px;background:#ffab00;border-radius:32px;"><div style="left:28.5px;top:16px;width:6px;height:21px;background:#1d1d1f;"></div><div style="left:28.5px;top:42px;width:6px;height:6px;background:#1d1d1f;"></div></div></div><div class="row" style="left:0px;top:897.2px;width:1863.7px;height:149px;background:#212123;box-sizing:border-box;border-top:4px solid #545456;"><svg style="left:239.2px;top:33.6px;width:74.4px;height:76.8px" viewBox="0 0 24 24" fill="#9a9a9a" preserveAspectRatio="none"><path d="M13 7h9v2h-9zM13 15h9v2h-9zM16 11h6v2h-6zM13 12L8 7v4H2v2h6v4z"/></svg><span class="t" style="left:365.9px;top:47.6px;font-size:51.0px;color:#bfbfbf;">Perform FIT</span><div style="left:1182.4px;top:14px;width:117px;height:117px;background:#2b2b2d;border-radius:59px;"><svg style="left:20.2px;top:19px;width:75.2px;height:75.2px" viewBox="0 0 24 24" fill="#58585a" preserveAspectRatio="none"><path d="M9.78 11.16l-1.42 1.42c-.68-.69-1.34-1.58-1.79-2.94l1.94-.49c.32.89.77 1.5 1.27 2.01zM11 6L7 2 3 6h3.02c.02.81.08 1.54.19 2.17l1.94-.49C8.08 7.2 8.03 6.63 8.02 6H11zm10 0l-4-4-4 4h2.99c-.1 3.68-1.28 4.75-2.54 5.88-.5.44-1.01.92-1.45 1.55-.34-.49-.73-.88-1.13-1.24L9.46 13.6c.93.85 1.54 1.54 1.54 3.4v5h2v-5c0-2.02.71-2.66 1.79-3.63 1.38-1.24 3.08-2.78 3.2-7.37H21z"/></svg></div><div style="left:1759.4px;top:40px;width:63px;height:63px;background:#ffab00;border-radius:32px;"><div style="left:28.5px;top:16px;width:6px;height:21px;background:#1d1d1f;"></div><div style="left:28.5px;top:42px;width:6px;height:6px;background:#1d1d1f;"></div></div></div><div class="row" style="left:0px;top:1046.2px;width:1863.7px;height:149px;background:#212123;box-sizing:border-box;border-top:4px solid #545456;"><svg style="left:239.2px;top:33.6px;width:74.4px;height:76.8px" viewBox="0 0 24 24" fill="#9a9a9a" preserveAspectRatio="none"><path d="M13 7h9v2h-9zM13 15h9v2h-9zM16 11h6v2h-6zM13 12L8 7v4H2v2h6v4z"/></svg><span class="t" style="left:365.9px;top:47.6px;font-size:51.0px;color:#bfbfbf;transform:scaleX(1.0032);">Drill 8 1/2" hole to section TD</span><div style="left:1182.4px;top:14px;width:117px;height:117px;background:#2b2b2d;border-radius:59px;"><svg style="left:20.2px;top:19px;width:75.2px;height:75.2px" viewBox="0 0 24 24" fill="#58585a" preserveAspectRatio="none"><path d="M9.78 11.16l-1.42 1.42c-.68-.69-1.34-1.58-1.79-2.94l1.94-.49c.32.89.77 1.5 1.27 2.01zM11 6L7 2 3 6h3.02c.02.81.08 1.54.19 2.17l1.94-.49C8.08 7.2 8.03 6.63 8.02 6H11zm10 0l-4-4-4 4h2.99c-.1 3.68-1.28 4.75-2.54 5.88-.5.44-1.01.92-1.45 1.55-.34-.49-.73-.88-1.13-1.24L9.46 13.6c.93.85 1.54 1.54 1.54 3.4v5h2v-5c0-2.02.71-2.66 1.79-3.63 1.38-1.24 3.08-2.78 3.2-7.37H21z"/></svg></div><div style="left:1759.4px;top:40px;width:63px;height:63px;background:#ffab00;border-radius:32px;"><div style="left:28.5px;top:16px;width:6px;height:21px;background:#1d1d1f;"></div><div style="left:28.5px;top:42px;width:6px;height:6px;background:#1d1d1f;"></div></div></div><div class="row" style="left:0px;top:1195.2px;width:1863.7px;height:149px;background:#212123;box-sizing:border-box;border-top:4px solid #545456;"><svg style="left:239.2px;top:33.6px;width:74.4px;height:76.8px" viewBox="0 0 24 24" fill="#9a9a9a" preserveAspectRatio="none"><path d="M13 7h9v2h-9zM13 15h9v2h-9zM16 11h6v2h-6zM13 12L8 7v4H2v2h6v4z"/></svg><span class="t" style="left:367.9px;top:47.6px;font-size:51.0px;color:#bfbfbf;transform:scaleX(0.9864);">Circulate hole clean at TD</span><div style="left:1182.4px;top:14px;width:117px;height:117px;background:#2b2b2d;border-radius:59px;"><svg style="left:20.2px;top:19px;width:75.2px;height:75.2px" viewBox="0 0 24 24" fill="#58585a" preserveAspectRatio="none"><path d="M9.78 11.16l-1.42 1.42c-.68-.69-1.34-1.58-1.79-2.94l1.94-.49c.32.89.77 1.5 1.27 2.01zM11 6L7 2 3 6h3.02c.02.81.08 1.54.19 2.17l1.94-.49C8.08 7.2 8.03 6.63 8.02 6H11zm10 0l-4-4-4 4h2.99c-.1 3.68-1.28 4.75-2.54 5.88-.5.44-1.01.92-1.45 1.55-.34-.49-.73-.88-1.13-1.24L9.46 13.6c.93.85 1.54 1.54 1.54 3.4v5h2v-5c0-2.02.71-2.66 1.79-3.63 1.38-1.24 3.08-2.78 3.2-7.37H21z"/></svg></div><div style="left:1759.4px;top:40px;width:63px;height:63px;background:#ffab00;border-radius:32px;"><div style="left:28.5px;top:16px;width:6px;height:21px;background:#1d1d1f;"></div><div style="left:28.5px;top:42px;width:6px;height:6px;background:#1d1d1f;"></div></div></div><div class="row" style="left:0px;top:1344.2px;width:1863.7px;height:149px;background:#212123;box-sizing:border-box;border-top:4px solid #545456;"><svg style="left:239.2px;top:33.6px;width:74.4px;height:76.8px" viewBox="0 0 24 24" fill="#9a9a9a" preserveAspectRatio="none"><path d="M13 7h9v2h-9zM13 15h9v2h-9zM16 11h6v2h-6zM13 12L8 7v4H2v2h6v4z"/></svg><span class="t" style="left:365.8px;top:47.6px;font-size:51.0px;color:#bfbfbf;transform:scaleX(1.0218);">Pull into casing</span><div style="left:1182.4px;top:14px;width:117px;height:117px;background:#2b2b2d;border-radius:59px;"><svg style="left:20.2px;top:19px;width:75.2px;height:75.2px" viewBox="0 0 24 24" fill="#58585a" preserveAspectRatio="none"><path d="M9.78 11.16l-1.42 1.42c-.68-.69-1.34-1.58-1.79-2.94l1.94-.49c.32.89.77 1.5 1.27 2.01zM11 6L7 2 3 6h3.02c.02.81.08 1.54.19 2.17l1.94-.49C8.08 7.2 8.03 6.63 8.02 6H11zm10 0l-4-4-4 4h2.99c-.1 3.68-1.28 4.75-2.54 5.88-.5.44-1.01.92-1.45 1.55-.34-.49-.73-.88-1.13-1.24L9.46 13.6c.93.85 1.54 1.54 1.54 3.4v5h2v-5c0-2.02.71-2.66 1.79-3.63 1.38-1.24 3.08-2.78 3.2-7.37H21z"/></svg></div><div style="left:1759.4px;top:40px;width:63px;height:63px;background:#ffab00;border-radius:32px;"><div style="left:28.5px;top:16px;width:6px;height:21px;background:#1d1d1f;"></div><div style="left:28.5px;top:42px;width:6px;height:6px;background:#1d1d1f;"></div></div></div><div class="row" style="left:0px;top:1493.2px;width:1863.7px;height:149px;background:#212123;box-sizing:border-box;border-top:4px solid #545456;"></div></div></main>
</body></html>
